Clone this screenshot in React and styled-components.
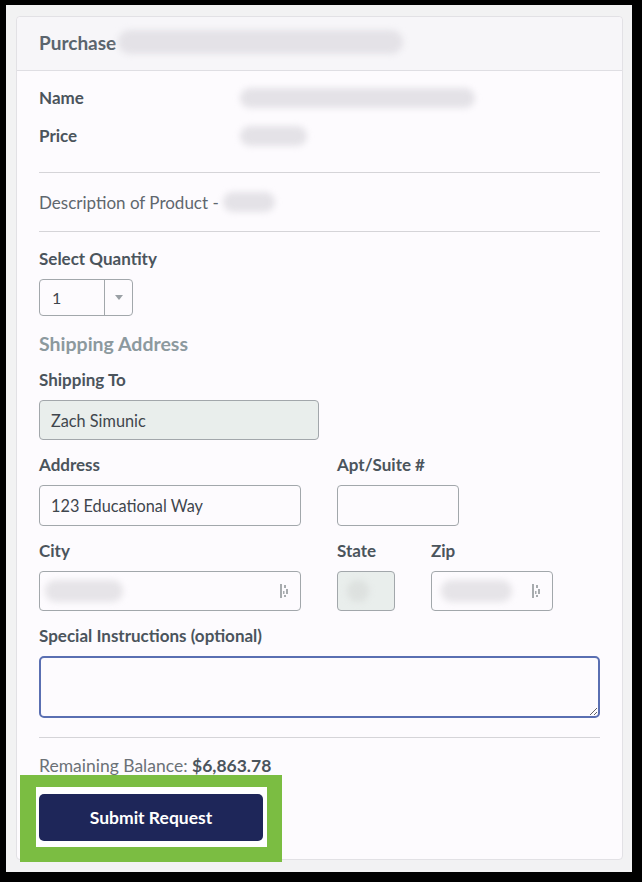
import React from "react";
import styled, { createGlobalStyle } from "styled-components";

const GlobalStyle = createGlobalStyle`
  body {
    margin: 0;
    background: #000;
    font-family: Lato, "Open Sans", Arial, sans-serif;
  }
  * { box-sizing: border-box; }
`;

const Frame = styled.div`
  width: 642px;
  height: 882px;
  background: #f2f2f3;
  border-style: solid;
  border-color: #000;
  border-width: 5px 10px 10px 6px;
  padding: 11px 9px 0 10px;
  overflow: hidden;
`;

const Card = styled.section`
  background: #fdfbfe;
  border: 1px solid #e2e1e5;
  border-radius: 4px;
  height: 844px;
  display: flex;
  flex-direction: column;
`;

const Header = styled.header`
  height: 54px;
  flex: 0 0 54px;
  display: flex;
  align-items: center;
  padding: 0 0 3px 22px;
  background: #f7f6f9;
  border-bottom: 1px solid #dfdee3;
  border-radius: 4px 4px 0 0;
  font-size: 19px;
  font-weight: 700;
  color: #5b656e;
`;

const Blur = styled.span`
  display: inline-block;
  width: ${p => p.w}px;
  height: ${p => p.h || 22}px;
  margin-left: ${p => p.ml || 0}px;
  background: ${p => p.c || "#e4e2e7"};
  border-radius: ${p => (p.round ? "50%" : "12px")};
  filter: blur(3px);
`;

const Body = styled.div`
  padding: 8px 22px 0 22px;
  display: flex;
  flex-direction: column;
`;

const InfoGrid = styled.div`
  display: grid;
  grid-template-columns: 201px 1fr;
  grid-auto-rows: 38px;
  align-items: center;
`;

const Label = styled.div`
  font-size: 17px;
  line-height: 20px;
  font-weight: 700;
  color: #4b545c;
`;

const Divider = styled.hr`
  border: 0;
  border-top: 1px solid #d5d4d8;
  margin: ${p => p.mt || 0}px 0 0 0;
`;

const Description = styled.div`
  height: 58px;
  display: flex;
  align-items: center;
  font-size: 17px;
  color: #5f676e;
`;

const Field = styled.div`
  display: flex;
  flex-direction: column;
  gap: 10px;
  margin-top: ${p => p.mt ?? 15}px;
  width: ${p => (p.w ? `${p.w}px` : "auto")};
`;

const Row = styled.div`
  display: flex;
  gap: 36px;
`;

const SectionTitle = styled.div`
  margin-top: 17px;
  font-size: 19.5px;
  line-height: 22px;
  font-weight: 700;
  color: #8c999e;
`;

const Select = styled.div`
  width: 94px;
  height: 37px;
  border: 1px solid #a2a7ab;
  border-radius: 4px;
  display: flex;
  align-items: center;
  font-size: 16px;
  color: #3f464d;
  span:first-child {
    flex: 0 0 65px;
    padding-left: 12px;
    border-right: 1px solid #a2a7ab;
    height: 100%;
    display: flex;
    align-items: center;
  }
  span:last-child {
    flex: 1;
    display: flex;
    justify-content: center;
  }
`;

const Input = styled.div`
  height: ${p => p.h || 40}px;
  width: ${p => (p.w ? `${p.w}px` : "100%")};
  border: 1px solid #a2a7ab;
  border-radius: 4px;
  background: ${p => (p.disabled ? "#e9eeec" : "#fdfbfe")};
  display: flex;
  align-items: center;
  justify-content: space-between;
  padding: 0 12px 0 ${p => p.pl ?? 11}px;
  font-size: 16.3px;
  color: #3f464d;
`;

const TextArea = styled.textarea`
  width: 561px;
  height: 62px;
  border: 2px solid #5a6fb2;
  border-radius: 5px;
  background: #fdfbfe;
  outline: none;
  font-family: inherit;
  resize: vertical;
`;

const Balance = styled.div`
  margin-top: 18px;
  font-size: 17.5px;
  line-height: 20px;
  color: #6b7177;
  b { color: #4b545c; font-weight: 700; }
`;

const Highlight = styled.div`
  align-self: flex-start;
  margin: -1px 0 0 -19px;
  padding: 12px 15px 15px 16px;
  background: #7bbd42;
`;

const WhiteBox = styled.div`
  background: #fff;
  padding: 7px 4px 6px 3px;
`;

const Button = styled.button`
  width: 224px;
  height: 47px;
  border: 0;
  border-radius: 5px;
  background: #1e2659;
  color: #fff;
  font-family: inherit;
  font-size: 17.5px;
  font-weight: 700;
`;

const Caret = () => (
  <svg width="8" height="5" viewBox="0 0 8 5">
    <path d="M0 0h8L4 5z" fill="#9aa0a5" />
  </svg>
);

const FillIcon = () => (
  <svg width="8" height="14" viewBox="0 0 8 14">
    <rect x="0" y="0" width="2" height="14" fill="#a7abae" />
    <rect x="4" y="1" width="2" height="3" fill="#a7abae" />
    <rect x="6" y="5" width="2" height="5" fill="#a7abae" />
    <rect x="3" y="7" width="1.5" height="3" fill="#a7abae" />
    <rect x="4" y="11" width="2" height="2" fill="#a7abae" />
  </svg>
);

const App = () => {
  return (
    <>
      <GlobalStyle />
      <Frame>
        <Card>
          <Header>
            Purchase
            <Blur w={285} h={24} ml={2} />
          </Header>
          <Body>
            <InfoGrid>
              <Label>Name</Label>
              <Blur w={235} h={20} />
              <Label>Price</Label>
              <Blur w={67} h={20} />
            </InfoGrid>
            <Divider mt={17} />
            <Description>
              Description of Product -&nbsp;
              <Blur w={52} h={20} />
            </Description>
            <Divider />
            <Field mt={17}>
              <Label>Select Quantity</Label>
              <Select>
                <span>1</span>
                <span><Caret /></span>
              </Select>
            </Field>
            <SectionTitle>Shipping Address</SectionTitle>
            <Field>
              <Label>Shipping To</Label>
              <Input w={280} disabled>Zach Simunic</Input>
            </Field>
            <Row>
              <Field w={262}>
                <Label>Address</Label>
                <Input h={41}>123 Educational Way</Input>
              </Field>
              <Field w={122}>
                <Label>Apt/Suite #</Label>
                <Input h={41} />
              </Field>
            </Row>
            <Row>
              <Field w={262}>
                <Label>City</Label>
                <Input pl={5}>
                  <Blur w={78} h={22} c="#e6e4e8" />
                  <FillIcon />
                </Input>
              </Field>
              <Field w={58}>
                <Label>State</Label>
                <Input disabled pl={9}>
                  <Blur w={22} h={22} c="#dde1df" round />
                </Input>
              </Field>
              <Field w={122}>
                <Label>Zip</Label>
                <Input pl={9}>
                  <Blur w={71} h={22} c="#e6e4e8" />
                  <FillIcon />
                </Input>
              </Field>
            </Row>
            <Field>
              <Label>Special Instructions (optional)</Label>
              <TextArea />
            </Field>
            <Divider mt={19} />
            <Balance>
              Remaining Balance: <b>$6,863.78</b>
            </Balance>
            <Highlight>
              <WhiteBox>
                <Button>Submit Request</Button>
              </WhiteBox>
            </Highlight>
          </Body>
        </Card>
      </Frame>
    </>
  );
};

export default App;
